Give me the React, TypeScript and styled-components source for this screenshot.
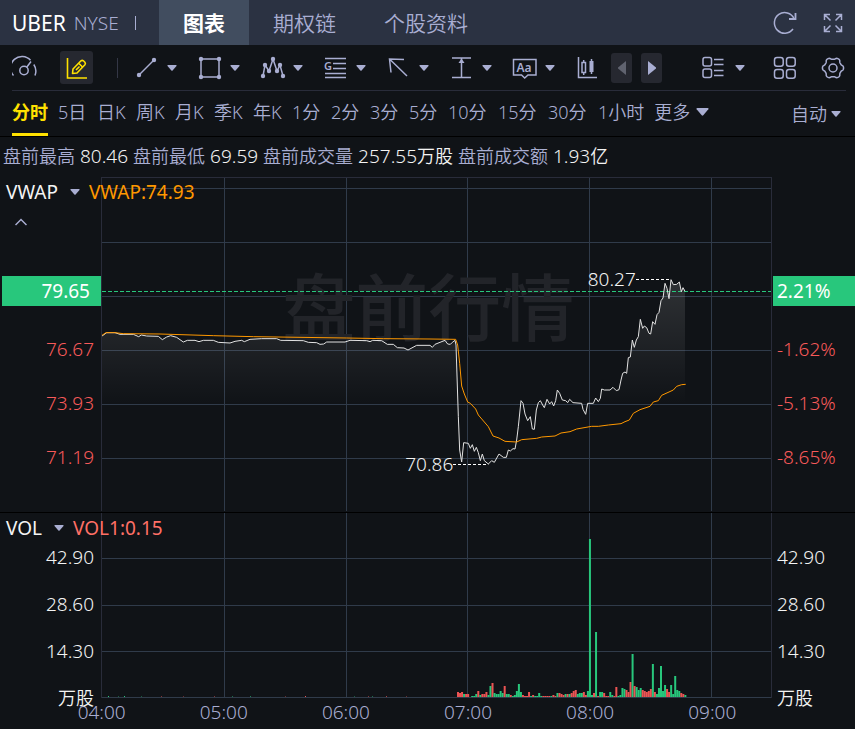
import React from "react";
import styled, { createGlobalStyle, css } from "styled-components";

const color = {
  bg: "#101317",
  header: "#2b3242",
  tab: "#414d5f",
  muted: "#a9aed2",
  text: "#f4f4f4",
  yellow: "#ffe100",
  green: "#28c77c",
  red: "#f75a5a",
  bar: "#eb5454",
  volRed: "#ff7066",
  orange: "#ff9800",
  grid: "#303b4a",
  edge: "#292c3a",
  button: "#262830",
};

const GlobalStyle = createGlobalStyle`
  * { box-sizing: border-box; }
  body {
    margin: 0;
    background: ${color.bg};
    color: ${color.text};
    font-family: "Noto Sans", "Noto Sans CJK SC", sans-serif;
    font-size: 19px;
    font-weight: 350;
    line-height: 24px;
  }
  button {
    margin: 0;
    padding: 0;
    border: 0;
    background: none;
    color: inherit;
    font: inherit;
    white-space: nowrap;
    cursor: pointer;
  }
  svg { display: block; flex: none; }
`;

const Page = styled.div`
  min-width: 760px;
  overflow: hidden;
`;

/* ---------- header ---------- */

const Header = styled.header`
  display: flex;
  align-items: stretch;
  height: 45px;
  padding-right: 9px;
  background: ${color.header};
`;

const Symbol = styled.div`
  display: flex;
  align-items: center;
  width: 159px;
  padding-left: 12px;
  gap: 8px;
  color: ${color.muted};
`;

const Ticker = styled.strong`
  color: #fff;
  font-size: 21px;
  font-weight: 400;
`;

const Divider = styled.span<{ $h: number }>`
  width: 1px;
  height: ${(p) => p.$h}px;
  background: currentColor;
`;

const SymbolDivider = styled(Divider)`
  margin-left: 8px;
`;

const Tabs = styled.nav`
  display: flex;
  flex: 1;
`;

const HeaderTab = styled.button<{ $active?: boolean }>`
  padding: 0 24px;
  color: ${color.muted};
  font-size: 21px;
  ${(p) =>
    p.$active &&
    css`
      background: ${color.tab};
      color: #fff;
      font-weight: 700;
    `}
`;

const HeaderActions = styled.div`
  display: flex;
  align-items: center;
  gap: 22px;
  color: ${color.muted};
`;

/* ---------- drawing toolbar ---------- */

const Toolbar = styled.div`
  display: flex;
  align-items: center;
  height: 46px;
  margin: 0 9px 0 12px;
  border-bottom: 1px solid ${color.edge};
  color: ${color.muted};
`;

const EditButton = styled.button`
  display: grid;
  place-items: center;
  width: 33px;
  height: 33px;
  margin: 0 24px 0 22px;
  border-radius: 3px;
  background: ${color.button};
  color: ${color.yellow};
`;

const ToolDivider = styled(Divider)`
  margin-right: 16px;
  background: #343746;
`;

const Tool = styled.button`
  display: flex;
  align-items: center;
  gap: 7px;
  width: 63px;
`;

const Stepper = styled.div`
  display: flex;
  gap: 9px;
  margin-left: 10px;
`;

const StepButton = styled.button`
  display: grid;
  place-items: center;
  width: 21px;
  height: 30px;
  border-radius: 3px;
  background: ${color.button};
  &:disabled { color: #60636f; }
`;

const ToolbarEnd = styled.div`
  display: flex;
  align-items: center;
  gap: 22px;
  margin-left: auto;
`;

const LayoutButton = styled.button`
  display: flex;
  align-items: center;
  gap: 9px;
  margin-right: 5px;
`;

/* ---------- periods ---------- */

const Periods = styled.div`
  display: flex;
  align-items: stretch;
  height: 46px;
  padding: 0 14px 0 12px;
  border-bottom: 1px solid #000;
  color: ${color.muted};
  font-size: 18px;
`;

const PeriodList = styled.nav`
  display: flex;
  flex: 1;
  gap: 10px;
`;

const Period = styled.button<{ $active?: boolean; $wide?: boolean }>`
  display: flex;
  align-items: center;
  gap: 6px;
  min-width: ${(p) => (p.$wide ? 40 : 29)}px;
  border-bottom: 3px solid transparent;
  ${(p) =>
    p.$active &&
    css`
      border-bottom-color: ${color.yellow};
      color: ${color.yellow};
      font-weight: 700;
    `}
`;

const Adjust = styled.button`
  display: flex;
  align-items: center;
  gap: 4px;
`;

/* ---------- statistics ---------- */

const Stats = styled.dl`
  display: flex;
  align-items: center;
  gap: 5px;
  height: 40px;
  margin: 0;
  padding: 0 0 2px 3px;
  white-space: nowrap;
`;

const StatLabel = styled.dt`
  color: ${color.muted};
  font-size: 18px;
`;

const StatValue = styled.dd`
  margin: 0;
`;

const Unit = styled.span`
  font-size: 18px;
`;

/* ---------- chart panes ---------- */

const Pane = styled.section`
  position: relative;
  display: grid;
  grid-template-columns: 101px minmax(0, 1fr) 83px;
`;

const PricePane = styled(Pane)`
  border-bottom: 1px solid #000;
`;

const Plot = styled.div`
  position: relative;
`;

const PlotSvg = styled.svg<{ $h: number }>`
  width: 100%;
  height: ${(p) => p.$h}px;
`;

const PriceAxis = styled.div<{ $side: "left" | "right" }>`
  display: flex;
  flex-direction: column;
  padding-top: 99px;
  color: ${color.red};
  text-align: ${(p) => (p.$side === "left" ? "right" : "left")};
`;

const PriceTag = styled.div<{ $side: "left" | "right" }>`
  height: 30px;
  margin: ${(p) => (p.$side === "left" ? "0 0 16px 2px" : "0 0 16px 1px")};
  padding: ${(p) => (p.$side === "left" ? "0 11px 0 0" : "0 0 0 4px")};
  background: ${color.green};
  color: #fff;
  font-weight: 400;
  line-height: 30px;
`;

const PriceTick = styled.span`
  padding: 0 7px 0 5px;
  line-height: 54px;
`;

const VolumeAxis = styled.div<{ $side: "left" | "right" }>`
  display: flex;
  flex-direction: column;
  margin-bottom: -24px;
  padding-top: 21px;
  text-align: ${(p) => (p.$side === "left" ? "right" : "left")};
`;

const VolumeTick = styled.span`
  padding: 0 7px 0 5px;
  line-height: 47px;
`;

const Legend = styled.div`
  position: absolute;
  z-index: 1;
  top: 0;
  left: 6px;
  display: flex;
  flex-direction: column;
  align-items: flex-start;
  font-weight: 400;
`;

const LegendRow = styled.div<{ $color: string }>`
  display: flex;
  align-items: center;
  gap: 9px;
  height: 30px;
  color: ${(p) => p.$color};
`;

const IndicatorButton = styled.button`
  display: flex;
  align-items: center;
  gap: 12px;
  color: ${color.text};
`;

const CollapseButton = styled.button`
  display: grid;
  place-items: center;
  width: 30px;
  height: 30px;
  color: ${color.muted};
`;

const Watermark = styled.div`
  position: absolute;
  top: 82px;
  left: 27%;
  color: #222429;
  font-size: 73px;
  font-weight: 500;
  line-height: 96px;
  white-space: nowrap;
`;

const Marks = styled.div`
  position: absolute;
  inset: 0;
`;

const Mark = styled.span<{ $right: string; $top: number }>`
  position: absolute;
  top: ${(p) => p.$top}px;
  right: ${(p) => p.$right};
`;

const ChartLayer = styled.div`
  position: relative;
`;

const TimeAxis = styled.div`
  display: flex;
  height: 31px;
  margin: 0 83px 0 101px;
  color: ${color.muted};
  text-align: center;
  line-height: 28px;
`;

const TimeTick = styled.span`
  flex: none;
  width: 18.2%;
  &:first-child { margin-left: -9%; }
`;

/* ---------- icons ---------- */

function Caret({ w = 10, h = 6 }: { w?: number; h?: number }) {
  return (
    <svg width={w} height={h} viewBox="0 0 10 6" preserveAspectRatio="none" fill={color.muted}>
      <path d="M1 0h8q1 0 .5 1L5.600 5.500q-.6.600-1.200 0L.5 1Q0 0 1 0z" />
    </svg>
  );
}

function Icon({ size = 26, children, stroke = 1.5 }: { size?: number; children: React.ReactNode; stroke?: number }) {
  return (
    <svg
      width={size}
      height={size}
      viewBox={`0 0 ${size} ${size}`}
      fill="none"
      stroke="currentColor"
      strokeWidth={stroke}
      aria-hidden="true"
    >
      {children}
    </svg>
  );
}

function Dots({ at }: { at: number[][] }) {
  return (
    <g fill="currentColor" stroke="none">
      {at.map(([x, y]) => (
        <circle key={`${x}-${y}`} cx={x} cy={y} r="2.2" />
      ))}
    </g>
  );
}

const zigzag = [[3, 21], [5, 10], [9, 16], [13, 4], [17, 16], [20, 10], [23, 21]];

const tools: { label: string; icon: React.ReactNode }[] = [
  {
    label: "线段",
    icon: (
      <Icon>
        <path d="M5 20 20 5" />
        <Dots at={[[5, 20], [20, 5]]} />
      </Icon>
    ),
  },
  {
    label: "形状",
    icon: (
      <Icon>
        <path d="M4 4h18v18H4z" />
        <Dots at={[[4, 4], [22, 4], [4, 22], [22, 22]]} />
      </Icon>
    ),
  },
  {
    label: "形态",
    icon: (
      <Icon>
        <polyline points={zigzag.join(" ")} />
        <Dots at={zigzag} />
      </Icon>
    ),
  },
  {
    label: "黄金分割",
    icon: (
      <Icon>
        <path d="M2 3.500h21M10 8.500h13M10 13.500h13M2 18.500h21M2 22.500h21" />
        <text x="1" y="14.500" fontSize="11" fontWeight="600" fill="currentColor" stroke="none">G</text>
      </Icon>
    ),
  },
  {
    label: "箭头",
    icon: (
      <Icon>
        <path d="M18 4.500 3.500 4 5 17.500M3.500 4 21 21" />
      </Icon>
    ),
  },
  {
    label: "测量",
    icon: (
      <Icon>
        <path d="M3 3h19M3 22.500h19M12.500 3v19" />
        <path d="M12.500 3.500 9.500 8h6z" fill="currentColor" stroke="none" />
      </Icon>
    ),
  },
  {
    label: "文字",
    icon: (
      <Icon>
        <path d="M1.500 4.500h22.500V20H16l-3.300 3L9.500 20h-8z" />
        <text x="4.500" y="17" fontSize="12" fontWeight="600" fill="currentColor" stroke="none">Aa</text>
      </Icon>
    ),
  },
];

function GaugeIcon() {
  return (
    <Icon>
      <path d="M1.500 20.500A11.200 11.200 0 0 1 18.500 5.200M21.800 9.500a12 12 0 0 1 1.200 11M19 6.500l-4.500 6" />
      <circle cx="12" cy="15.500" r="4.200" />
    </Icon>
  );
}

function PencilChartIcon() {
  return (
    <Icon stroke={1.6}>
      <path d="M3.500 3v20H23" />
      <path d="m8.500 18.500.5-4.500 8-8.200q1.200-1 2.400 0l1.500 1.500q1 1.200 0 2.400L13 18z" strokeLinejoin="round" />
      <path d="m15 8.500 3.500 3.500M12 15l3.500-3.500" />
    </Icon>
  );
}

function CandleIcon() {
  return (
    <Icon>
      <path d="M3.500 2v20.500H22M8.700 5v2.500M8.700 17.500V20M16.500 4v15" />
      <path d="M7 7.500h3.500v10H7z" />
      <path d="M14.500 6h4v11h-4z" fill="currentColor" stroke="none" />
    </Icon>
  );
}

function LayoutIcon() {
  return (
    <Icon>
      <rect x="3" y="2.500" width="8.500" height="8.500" rx="2" />
      <rect x="3" y="14" width="8.500" height="8.500" rx="2" />
      <path d="M14 4.500h9.500M14 9.500h9.500M14 15.500h9.500M14 20.500h9.500" />
    </Icon>
  );
}

function GridIcon() {
  return (
    <Icon>
      {[2.5, 14.5].map((x) =>
        [2.5, 14.5].map((y) => <rect key={`${x}-${y}`} x={x} y={y} width="8.700" height="8.700" rx="2.500" />),
      )}
    </Icon>
  );
}

function gearPath(cx: number, cy: number, r: number, amp: number, lobes: number) {
  const steps = 120;
  return Array.from({ length: steps }, (_, i) => {
    const a = (i / steps) * Math.PI * 2;
    const rr = r + amp * Math.tanh(1.8 * Math.cos(lobes * a));
    return `${i ? "L" : "M"}${(cx + rr * Math.cos(a)).toFixed(2)} ${(cy + rr * Math.sin(a)).toFixed(2)}`;
  }).join("") + "z";
}

function GearIcon() {
  return (
    <Icon>
      <path d={gearPath(13, 13, 9.6, 1, 6)} strokeLinejoin="round" />
      <circle cx="13" cy="13" r="4" />
    </Icon>
  );
}

function RefreshIcon() {
  return (
    <Icon>
      <path d="M22 8.500A10.300 10.300 0 1 0 21 19" />
      <path d="M23.500 3v6H17" strokeWidth="1.800" />
    </Icon>
  );
}

function ExpandIcon() {
  return (
    <Icon>
      <path d="M4.500 10V4.500H10M4.500 4.500l6 6M16 4.500h5.500V10M21.500 4.500l-6 6M4.500 16v5.500H10M4.500 21.500l6-6M16 21.500h5.500V16M21.500 21.500l-6-6" />
    </Icon>
  );
}

/* ---------- data ---------- */

const price =
  "3,477 17,467 42,467 57,472 97,472 113,479 121,474 137,477 172,478 184,488 197,480 209,476 227,481 247,495 259,490 282,490 294,494 307,490 337,490 352,496 387,498 402,493 422,490 430,494 447,487 482,485 527,485 539,490 607,491 622,496 647,497 657,502 668,501 677,495 732,495 747,490 797,491 807,494 815,490 842,491 859,502 877,502 889,512 909,513 921,519 947,505 987,505 994,511 1002,502 1017,496 1032,490 1040,501 1048,502 1054,496 1062,490 1065,504 1072,719 1076,819 1082,855 1088,797 1102,799 1108,814 1114,803 1120,823 1126,811 1132,827 1138,851 1144,831 1150,851 1162,861 1172,851 1180,856 1194,831 1207,841 1216,841 1222,819 1228,822 1236,815 1242,816 1247,789 1252,749 1260,671 1266,679 1272,711 1280,731 1288,719 1294,756 1300,757 1306,699 1312,677 1318,671 1325,684 1330,692 1338,667 1346,681 1352,674 1358,687 1364,671 1369,639 1376,649 1384,669 1394,671 1400,677 1406,667 1416,677 1442,679 1446,697 1454,712 1460,679 1477,679 1484,663 1492,674 1498,664 1502,636 1510,639 1527,639 1536,631 1546,641 1554,638 1560,609 1565,589 1572,585 1577,589 1582,542 1588,540 1594,489 1600,511 1606,489 1612,479 1618,427 1625,454 1630,447 1637,452 1644,469 1649,471 1655,434 1662,442 1668,413 1674,406 1680,371 1686,363 1692,319 1698,334 1704,365 1710,308 1717,323 1727,322 1735,315 1741,344 1746,332 1752,343";

const vwap =
  "3,475 15,467 42,467 67,470 177,471 337,476 457,479 597,481 737,483 847,485 987,486 1064,487 1070,504 1076,559 1082,627 1090,651 1100,675 1108,679 1124,696 1132,714 1162,749 1176,777 1194,783 1212,793 1247,795 1262,788 1307,784 1322,780 1362,777 1380,768 1407,764 1427,756 1472,748 1492,748 1522,744 1560,740 1572,734 1585,729 1597,709 1617,698 1647,688 1657,675 1672,671 1682,655 1717,639 1727,628 1742,623 1754,622";

/* one entry per minute from 06:55, r = down, g = up */
const volume =
  "r5 r4 r5 g3 r3 r3 r0 g1 g1 g3 r6 g2 r3 r3 r5 g2 g11 r14 g4 g3 g3 g6 g4 r11 g3 g3 r2 g1 g2 g6 g13 g5 r2 r1 r1 r5 g1 r2 g1 g1 g4 g1 r1 r1 r1 r1 g1 r2 r1 g4 r4 r3 r2 g3 r3 g3 r4 r6 r7 g3 g4 g4 r5 r2 g6 g158 g2 r4 g65 r1 g5 g5 r4 r1 r1 g5 g2 r1 r10 g1 g2 g9 g8 r7 r5 r15 g43 r11 g10 g7 g9 r7 r6 r5 r6 r8 g33 r5 g3 g9 g31 g6 g12 r8 r5 g12 g3 g21 g7 g6 r4 r3 g2"
    .split(" ")
    .map((s, i) => ({ x: 356 + i * 2.03, h: Number(s.slice(1)), up: s[0] === "g" }));

const earlyVolume = [
  { x: 7, up: true, o: 1 }, { x: 17, up: true, o: 0.4 }, { x: 23, up: true, o: 1 }, { x: 40, up: true, o: 0.4 },
  { x: 60, up: false, o: 0.5 }, { x: 82, up: false, o: 0.4 }, { x: 113, up: false, o: 0.5 }, { x: 131, up: true, o: 0.5 },
  { x: 149, up: true, o: 0.6 }, { x: 184, up: false, o: 0.4 }, { x: 204, up: false, o: 1 }, { x: 253, up: true, o: 0.4 },
  { x: 267, up: false, o: 0.5 }, { x: 271, up: true, o: 0.5 }, { x: 285, up: false, o: 0.7 }, { x: 305, up: false, o: 0.4 },
];

const columns = [123, 245, 366, 488, 610];
const periods = ["分时", "5日", "日K", "周K", "月K", "季K", "年K", "1分", "2分", "3分", "5分", "10分", "15分", "30分", "1小时"];
const stats = [
  { label: "盘前最高", value: "80.46" },
  { label: "盘前最低", value: "69.59" },
  { label: "盘前成交量", value: "257.55", unit: "万股" },
  { label: "盘前成交额", value: "1.93", unit: "亿" },
];
const volumeTicks = ["42.90", "28.60", "14.30"];

/* ---------- charts ---------- */

function PriceGrid() {
  return (
    <PlotSvg $h={335} viewBox="0 0 671 335" preserveAspectRatio="none" shapeRendering="crispEdges">
      <g fill={color.grid}>
        {[11, 65, 119, 173, 227, 281].map((y) => <rect key={y} x="0" y={y} width="671" height="1" />)}
        {columns.map((x) => <rect key={x} x={x} y="0" width="1" height="334" />)}
      </g>
      <g fill={color.edge}>
        <rect x="0" y="0" width="671" height="1" />
        <rect x="0" y="0" width="1" height="334" />
        <rect x="670" y="0" width="1" height="334" />
      </g>
    </PlotSvg>
  );
}

function PriceLines() {
  return (
    <PlotSvg $h={335} viewBox="0 0 2013 1005" preserveAspectRatio="none" fill="none">
      <defs>
        <linearGradient id="area" gradientUnits="userSpaceOnUse" x1="0" y1="308" x2="0" y2="680">
          <stop offset="0" stopColor="#fff" stopOpacity="0.130" />
          <stop offset="1" stopColor="#fff" stopOpacity="0" />
        </linearGradient>
      </defs>
      <polygon points={`3,1005 ${price} 1752,1005`} fill="url(#area)" />
      <path d="M3 343.500H2010" stroke={color.green} strokeWidth="3" strokeDasharray="12 6" />
      <path d="M1605 307.500H1710M1056 862.500H1162" stroke="#fff" strokeWidth="3" strokeDasharray="9 6" />
      <polyline points={price} stroke="#e2e2e2" strokeWidth="1" vectorEffect="non-scaling-stroke" />
      <polyline points={vwap} stroke={color.orange} strokeWidth="1" vectorEffect="non-scaling-stroke" />
    </PlotSvg>
  );
}

function VolumeChart() {
  return (
    <PlotSvg $h={185} viewBox="0 0 671 185" preserveAspectRatio="none">
      <g fill={color.grid} shapeRendering="crispEdges">
        {[45, 92, 138, 184].map((y) => <rect key={y} x="0" y={y} width="671" height="1" />)}
        {columns.map((x) => <rect key={x} x={x} y="0" width="1" height="185" />)}
      </g>
      <g fill={color.edge} shapeRendering="crispEdges">
        <rect x="0" y="0" width="1" height="185" />
        <rect x="670" y="0" width="1" height="185" />
      </g>
      {volume.map((v) => (
        <rect key={v.x} x={v.x} y={184 - v.h} width="2" height={v.h} fill={v.up ? color.green : color.bar} />
      ))}
      {earlyVolume.map((v) => (
        <rect key={v.x} x={v.x} y="183" width="1" height="1" opacity={v.o} fill={v.up ? color.green : color.bar} />
      ))}
    </PlotSvg>
  );
}

function VolumeScale({ side }: { side: "left" | "right" }) {
  return (
    <VolumeAxis $side={side}>
      {volumeTicks.map((t) => <VolumeTick key={t}>{t}</VolumeTick>)}
      <VolumeTick><Unit>万股</Unit></VolumeTick>
    </VolumeAxis>
  );
}

function PriceScale({ side, current, ticks }: { side: "left" | "right"; current: string; ticks: string[] }) {
  return (
    <PriceAxis $side={side}>
      <PriceTag $side={side}>{current}</PriceTag>
      {ticks.map((t) => <PriceTick key={t}>{t}</PriceTick>)}
    </PriceAxis>
  );
}

export default function App() {
  return (
    <Page>
      <GlobalStyle />
      <Header>
        <Symbol>
          <Ticker>UBER</Ticker>
          <span>NYSE</span>
          <SymbolDivider $h={14} />
        </Symbol>
        <Tabs>
          <HeaderTab $active>图表</HeaderTab>
          <HeaderTab>期权链</HeaderTab>
          <HeaderTab>个股资料</HeaderTab>
        </Tabs>
        <HeaderActions>
          <button aria-label="刷新"><RefreshIcon /></button>
          <button aria-label="全屏"><ExpandIcon /></button>
        </HeaderActions>
      </Header>

      <Toolbar>
        <button aria-label="行情"><GaugeIcon /></button>
        <EditButton aria-label="画线"><PencilChartIcon /></EditButton>
        <ToolDivider $h={20} />
        {tools.map((t) => (
          <Tool key={t.label} aria-label={t.label}>
            {t.icon}
            <Caret />
          </Tool>
        ))}
        <button aria-label="K线"><CandleIcon /></button>
        <Stepper>
          <StepButton aria-label="上一页" disabled>
            <svg width="8" height="14" viewBox="0 0 8 14" fill="currentColor"><path d="M8 0v14L0 7.500v-1z" /></svg>
          </StepButton>
          <StepButton aria-label="下一页">
            <svg width="8" height="14" viewBox="0 0 8 14" fill="currentColor"><path d="M0 0v14l8-6.500v-1z" /></svg>
          </StepButton>
        </Stepper>
        <ToolbarEnd>
          <LayoutButton aria-label="列表"><LayoutIcon /><Caret /></LayoutButton>
          <button aria-label="布局"><GridIcon /></button>
          <button aria-label="设置"><GearIcon /></button>
        </ToolbarEnd>
      </Toolbar>

      <Periods>
        <PeriodList>
          {periods.map((p, i) => (
            <Period key={p} $active={i === 0} $wide={p.length > 2}>{p}</Period>
          ))}
          <Period>更多<Caret w={13} h={8} /></Period>
        </PeriodList>
        <Adjust>自动<Caret /></Adjust>
      </Periods>

      <Stats>
        {stats.map((s) => (
          <React.Fragment key={s.label}>
            <StatLabel>{s.label}</StatLabel>
            <StatValue>{s.value}{s.unit && <Unit>{s.unit}</Unit>}</StatValue>
          </React.Fragment>
        ))}
      </Stats>

      <PricePane>
        <Legend>
          <LegendRow $color={color.orange}>
            <IndicatorButton>VWAP<Caret /></IndicatorButton>
            <span>VWAP:74.93</span>
          </LegendRow>
          <CollapseButton aria-label="收起">
            <svg width="12" height="8" viewBox="0 0 12 8" fill="none" stroke="currentColor" strokeWidth="1.500"><path d="M.5 7 6 1.500 11.500 7" /></svg>
          </CollapseButton>
        </Legend>
        <PriceScale side="left" current="79.65" ticks={["76.67", "73.93", "71.19"]} />
        <Plot>
          <PriceGrid />
          <Marks>
            <Watermark>盘前行情</Watermark>
            <ChartLayer><PriceLines /></ChartLayer>
            <Mark $top={90} $right="20.3%">80.27</Mark>
            <Mark $top={275} $right="47.5%">70.86</Mark>
          </Marks>
        </Plot>
        <PriceScale side="right" current="2.21%" ticks={["-1.62%", "-5.13%", "-8.65%"]} />
      </PricePane>

      <Pane>
        <Legend>
          <LegendRow $color={color.volRed}>
            <IndicatorButton>VOL<Caret /></IndicatorButton>
            <span>VOL1:0.15</span>
          </LegendRow>
        </Legend>
        <VolumeScale side="left" />
        <Plot><VolumeChart /></Plot>
        <VolumeScale side="right" />
      </Pane>
      <TimeAxis>
        {["04:00", "05:00", "06:00", "07:00", "08:00", "09:00"].map((t) => <TimeTick key={t}>{t}</TimeTick>)}
      </TimeAxis>
    </Page>
  );
}
